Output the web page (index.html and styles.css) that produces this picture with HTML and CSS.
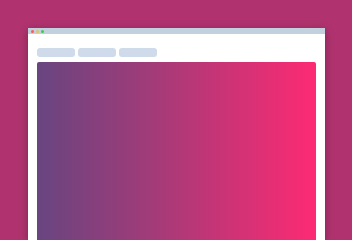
FILE: index.html
```html
<!DOCTYPE html>
<html>
<head>
<meta charset="utf-8">
<link rel="stylesheet" href="styles.css">
</head>
<body>
<div class="window">
  <div class="titlebar">
    <span class="dot red"></span>
    <span class="dot yellow"></span>
    <span class="dot green"></span>
  </div>
  <div class="content">
    <div class="tabs">
      <div class="tab"></div>
      <div class="tab"></div>
      <div class="tab"></div>
    </div>
    <div class="hero"></div>
  </div>
</div>
</body>
</html>
```
FILE: styles.css
```css
html, body {
  margin: 0;
  padding: 0;
  width: 100%;
  height: 100vh;
  overflow: hidden;
  background: #b0336f;
  font-family: "Liberation Sans", Arial, sans-serif;
}
body {
  padding: 28px 27px 0 28px;
  box-sizing: border-box;
  display: flex;
  flex-direction: column;
}
.window {
  width: 297px;
  flex: 1;
  background: #ffffff;
  box-shadow: 0 2px 8px rgba(40, 0, 30, 0.35);
  display: flex;
  flex-direction: column;
}
.titlebar {
  height: 6px;
  background: #c3d0de;
  display: flex;
  align-items: center;
  gap: 2px;
  padding-left: 3px;
}
.dot {
  width: 3px;
  height: 3px;
  border-radius: 50%;
}
.red { background: #f0605c; }
.yellow { background: #f6be4f; }
.green { background: #3dc94f; }
.content {
  padding: 14px 9px 0 9px;
  display: flex;
  flex-direction: column;
  gap: 5px;
  flex: 1;
}
.tabs {
  display: flex;
  gap: 3px;
}
.tab {
  width: 38px;
  height: 9px;
  border-radius: 3px;
  background: #cfdbeb;
}
.hero {
  flex: 1;
  border-radius: 2px 2px 0 0;
  background: linear-gradient(to right, #684580, #a83a78 45%, #fd2a73);
}
```
